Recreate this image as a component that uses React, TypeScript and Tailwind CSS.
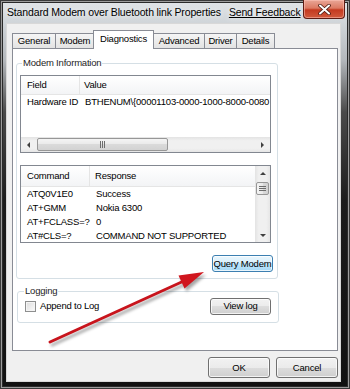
import type { ReactNode } from 'react';

/**
 * Modem properties dialog (Windows 7 look), Diagnostics tab.
 */

const Button = ({ children, hot, className }: { children: ReactNode; hot?: boolean; className: string }) => (
  <div
    className={`flex items-center justify-center whitespace-nowrap rounded-[3px] border text-[9.5px] leading-none tracking-[-0.2px] text-black shadow-[inset_0_0_0_1px_rgba(255,255,255,0.75)] ${
      hot
        ? 'border-[#3c7fb1] bg-[linear-gradient(to_bottom,#eaf6fd_0%,#d9f0fc_50%,#bee6fd_50%,#a7d9f5_100%)]'
        : 'border-[#707070] bg-[linear-gradient(to_bottom,#f2f2f2_0%,#ebebeb_50%,#dddddd_50%,#cfcfcf_100%)]'
    } ${className}`}
  >
    {children}
  </div>
);

const Arrow = ({ dir }: { dir: 'left' | 'right' | 'up' | 'down' }) => {
  const pts = {
    left: '5,1 2,4 5,7',
    right: '3,1 6,4 3,7',
    up: '1,5 4,2 7,5',
    down: '1,3 4,6 7,3',
  }[dir];
  return (
    <svg width="8" height="8" viewBox="0 0 8 8">
      <polygon points={pts} fill="#404040" />
    </svg>
  );
};

const Grip = ({ vertical }: { vertical?: boolean }) => (
  <svg width={vertical ? 7 : 6} height={vertical ? 6 : 7} viewBox={vertical ? '0 0 7 6' : '0 0 6 7'}>
    {[0, 2, 4].map((o) =>
      vertical ? (
        <line key={o} x1="0" x2="7" y1={o + 0.5} y2={o + 0.5} stroke="#6d6d6d" strokeWidth="1" />
      ) : (
        <line key={o} y1="0" y2="7" x1={o + 0.5} x2={o + 0.5} stroke="#6d6d6d" strokeWidth="1" />
      ),
    )}
  </svg>
);

const TAB = 'flex items-center justify-center border-l border-t border-r border-[#898c95] text-[9.5px] leading-none tracking-[-0.2px]';
const INACTIVE = 'h-[15px] -ml-px bg-[linear-gradient(to_bottom,#f5f5f5,#e3e3e3)]';

export default function App() {
  return (
    <div className="relative flex h-[389px] w-[350px] flex-col overflow-hidden bg-[linear-gradient(to_bottom,#e2e5e8_0px,#cfd4d8_24px,#b4b8bc_60px,#4a4a4a_112px,#1c1c1c_200px,#111111_100%)] font-['Liberation_Sans',Arial,sans-serif] text-black shadow-[inset_0_0_0_1px_#3a3a3a,inset_0_0_0_2px_#9c9c9c,inset_0_0_0_3px_#2a2a2a]">
      {/* title bar */}
      <div className="flex h-[24px] items-start whitespace-nowrap">
        <div className="pl-[7px] pt-[5px] text-[10.5px] leading-[14px] tracking-[-0.15px] [text-shadow:0_0_5px_#ffffff]">
          Standard Modem over Bluetooth link Properties
        </div>
        <div className="ml-[8px] pt-[5px] text-[10.5px] leading-[14px] tracking-[-0.15px] underline [text-shadow:0_0_5px_#ffffff]">
          Send Feedback
        </div>
        <div className="ml-auto mr-[5px] flex h-[19px] w-[42px] items-center justify-center rounded-b-[4px] border border-t-0 border-[#5e1c14] bg-[linear-gradient(to_bottom,#e9a697_0%,#dc7a63_45%,#c4391f_55%,#d1593c_100%)] shadow-[inset_0_0_0_1px_rgba(255,200,190,0.5)]">
          <svg width="13" height="11" viewBox="0 0 13 11">
            <path
              d="M2 1.5 L6.5 5.5 L11 1.5 M2 9.5 L6.5 5.5 L11 9.5"
              stroke="#4a1a12"
              strokeWidth="3.6"
              fill="none"
              strokeLinecap="round"
            />
            <path
              d="M2 1.5 L6.5 5.5 L11 1.5 M2 9.5 L6.5 5.5 L11 9.5"
              stroke="#ffffff"
              strokeWidth="2"
              fill="none"
              strokeLinecap="round"
            />
          </svg>
        </div>
      </div>

      {/* client area */}
      <div className="ml-[7px] flex h-[357px] w-[333px] flex-col bg-[#f0f0f0] pl-[5px] pr-[2px] pt-[6px] shadow-[0_0_0_1px_#d8d8d8]">
        {/* tabs */}
        <div className="flex h-[18px] items-end">
          <div className={`${TAB} h-[15px] w-[44px] bg-[linear-gradient(to_bottom,#f5f5f5,#e3e3e3)]`}>General</div>
          <div className={`${TAB} ${INACTIVE} w-[40px]`}>Modem</div>
          <div className={`${TAB} relative z-10 -mb-px -ml-[2px] h-[19px] w-[61px] bg-white pb-[2px]`}>Diagnostics</div>
          <div className={`${TAB} ${INACTIVE} w-[52px]`}>Advanced</div>
          <div className={`${TAB} ${INACTIVE} w-[33px]`}>Driver</div>
          <div className={`${TAB} ${INACTIVE} w-[39px]`}>Details</div>
        </div>

        {/* tab panel */}
        <div className="h-[303px] w-[326px] border border-[#898c95] bg-white text-[9.5px] tracking-[-0.2px]">
          <fieldset className="ml-[3px] mt-[8px] w-[262px] rounded-[3px] border border-[#d5dfe5] pb-[6px] pl-[3px] pr-[5px]">
            <legend className="ml-[2px] px-[1px] leading-[12px] text-[#1e1e1e]">Modem Information</legend>

            {/* field list */}
            <div className="mt-[6px] flex h-[78px] w-[251px] flex-col border border-[#828790] bg-white leading-none">
              <div className="flex h-[19px] items-center border-b border-[#e5e5e5] bg-[linear-gradient(to_bottom,#ffffff,#f3f4f6)]">
                <div className="flex h-full w-[59px] items-center border-r border-[#e5e5e5] pl-[6px]">Field</div>
                <div className="pl-[4px]">Value</div>
              </div>
              <div className="flex h-[14px] items-center whitespace-nowrap">
                <div className="w-[59px] pl-[6px]">Hardware ID</div>
                <div className="pl-[5px]">BTHENUM\{'{'}00001103-0000-1000-8000-0080</div>
              </div>
              <div className="mt-auto flex h-[15px] bg-[linear-gradient(to_bottom,#e3e3e3,#f0f0f0_25%,#f0f0f0_75%,#e6e6e6)]">
                <div className="flex w-[16px] items-center justify-center">
                  <Arrow dir="left" />
                </div>
                <div className="my-[1px] flex w-[131px] items-center justify-center rounded-[2px] border border-[#979797] bg-[linear-gradient(to_bottom,#f4f4f4,#e9e9e9_50%,#dadada_50%,#d2d2d2)]">
                  <Grip />
                </div>
                <div className="flex-1" />
                <div className="flex w-[16px] items-center justify-center">
                  <Arrow dir="right" />
                </div>
              </div>
            </div>

            {/* command list */}
            <div className="mt-[12px] flex h-[78px] w-[251px] overflow-hidden border border-[#828790] bg-white leading-none">
              <div className="flex flex-1 flex-col">
                <div className="flex h-[21px] shrink-0 items-center border-b border-[#e5e5e5] bg-[linear-gradient(to_bottom,#ffffff,#f3f4f6)]">
                  <div className="flex h-full w-[69px] items-center border-r border-[#e5e5e5] pl-[6px]">Command</div>
                  <div className="pl-[5px]">Response</div>
                </div>
                {[
                  ['ATQ0V1E0', 'Success'],
                  ['AT+GMM', 'Nokia 6300'],
                  ['AT+FCLASS=?', '0'],
                  ['AT#CLS=?', 'COMMAND NOT SUPPORTED'],
                ].map(([cmd, res]) => (
                  <div key={cmd} className="flex h-[14px] shrink-0 items-center whitespace-nowrap">
                    <div className="w-[69px] pl-[6px]">{cmd}</div>
                    <div className="pl-[6px]">{res}</div>
                  </div>
                ))}
              </div>
              <div className="flex w-[15px] flex-col bg-[linear-gradient(to_right,#e3e3e3,#f0f0f0_25%,#f0f0f0_75%,#e6e6e6)]">
                <div className="flex h-[15px] items-center justify-center">
                  <Arrow dir="up" />
                </div>
                <div className="mx-[1px] mt-[1px] flex h-[13px] items-center justify-center rounded-[2px] border border-[#979797] bg-[linear-gradient(to_right,#f4f4f4,#e9e9e9_50%,#dadada_50%,#d2d2d2)]">
                  <Grip vertical />
                </div>
                <div className="flex-1" />
                <div className="flex h-[15px] items-center justify-center">
                  <Arrow dir="down" />
                </div>
              </div>
            </div>

            <div className="mt-[12px] flex justify-end">
              <Button hot className="-mr-px h-[17px] w-[61px]">
                Query Modem
              </Button>
            </div>
          </fieldset>

          <fieldset className="ml-[4px] mt-[6px] w-[262px] rounded-[3px] border border-[#d5dfe5] pb-[7px] pl-[7px] pr-[7px]">
            <legend className="-ml-[1px] px-[1px] leading-[12px] text-[#1e1e1e]">Logging</legend>
            <div className="flex h-[18px] items-center">
              <div className="h-[11px] w-[11px] border border-[#8e8f8f] bg-[linear-gradient(to_bottom_right,#dcdcdc,#fbfbfb)] shadow-[inset_0_0_0_1px_#f4f4f4]" />
              <div className="ml-[4px] leading-none">Append to Log</div>
              <Button className="ml-auto h-[17px] w-[61px]">View log</Button>
            </div>
          </fieldset>
        </div>

        {/* dialog buttons */}
        <div className="mt-[6px] flex justify-end gap-[6px]">
          <Button className="h-[21px] w-[62px]">OK</Button>
          <Button className="h-[21px] w-[62px]">Cancel</Button>
        </div>
      </div>

      {/* annotation arrow drawn over the dialog */}
      <svg
        className="pointer-events-none absolute inset-0 drop-shadow-[2px_3px_1.5px_rgba(0,0,0,0.35)]"
        width="350"
        height="389"
        viewBox="0 0 350 389"
      >
        <line x1="50" y1="342" x2="186" y2="280" stroke="#c8141c" strokeWidth="3" strokeLinecap="round" />
        <polygon points="204,272 178.5,275.5 184.5,288.5" fill="#d0161e" />
      </svg>
    </div>
  );
}
